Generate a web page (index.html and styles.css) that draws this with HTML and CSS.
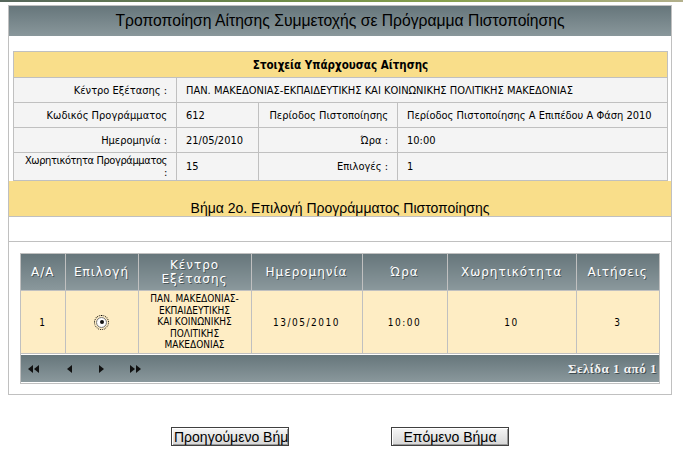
FILE: index.html
```html
<!DOCTYPE html>
<html lang="el">
<head>
    <meta charset="UTF-8">
    <title>Τροποποίηση Αίτησης Συμμετοχής</title>
    <link rel="stylesheet" href="styles.css">
</head>
<body>
    <div class="topline"></div>

    <div class="panel">
        <div class="panel-title">Τροποποίηση Αίτησης Συμμετοχής σε Πρόγραμμα Πιστοποίησης</div>

        <table class="info">
            <colgroup>
                <col class="c-lbl1">
                <col class="c-val1">
                <col class="c-lbl2">
                <col class="c-val2">
            </colgroup>
            <tr>
                <th colspan="4" class="info-head">Στοιχεία Υπάρχουσας Αίτησης</th>
            </tr>
            <tr>
                <td class="lbl">Κέντρο Εξέτασης :</td>
                <td colspan="3">ΠΑΝ. ΜΑΚΕΔΟΝΙΑΣ-ΕΚΠΑΙΔΕΥΤΙΚΗΣ ΚΑΙ ΚΟΙΝΩΝΙΚΗΣ ΠΟΛΙΤΙΚΗΣ ΜΑΚΕΔΟΝΙΑΣ</td>
            </tr>
            <tr>
                <td class="lbl">Κωδικός Προγράμματος</td>
                <td>612</td>
                <td class="lbl">Περίοδος Πιστοποίησης</td>
                <td>Περίοδος Πιστοποίησης Α Επιπέδου Α Φάση 2010</td>
            </tr>
            <tr>
                <td class="lbl">Ημερομηνία :</td>
                <td>21/05/2010</td>
                <td class="lbl">Ώρα :</td>
                <td>10:00</td>
            </tr>
            <tr class="tall">
                <td class="lbl nowrap">Χωρητικότητα Προγράμματος<br>:</td>
                <td>15</td>
                <td class="lbl">Επιλογές :</td>
                <td>1</td>
            </tr>
        </table>

        <div class="step-title">Βήμα 2ο. Επιλογή Προγράμματος Πιστοποίησης</div>
        <div class="step-gap"></div>

        <div class="grid-area">
            <div class="grid">
                <table class="grid-table">
                    <colgroup>
                        <col class="g-aa">
                        <col class="g-sel">
                        <col class="g-center">
                        <col class="g-date">
                        <col class="g-time">
                        <col class="g-cap">
                        <col class="g-req">
                    </colgroup>
                    <tr class="grid-head">
                        <th>Α/Α</th>
                        <th>Επιλογή</th>
                        <th>Κέντρο<br>Εξέτασης</th>
                        <th>Ημερομηνία</th>
                        <th>Ώρα</th>
                        <th>Χωρητικότητα</th>
                        <th>Αιτήσεις</th>
                    </tr>
                    <tr class="grid-row">
                        <td class="num">1</td>
                        <td><span class="radio"><span class="radio-dot"></span></span></td>
                        <td class="center-name">ΠΑΝ. ΜΑΚΕΔΟΝΙΑΣ-<br>ΕΚΠΑΙΔΕΥΤΙΚΗΣ<br>ΚΑΙ ΚΟΙΝΩΝΙΚΗΣ<br>ΠΟΛΙΤΙΚΗΣ<br>ΜΑΚΕΔΟΝΙΑΣ</td>
                        <td class="num">13/05/2010</td>
                        <td class="num">10:00</td>
                        <td class="num">10</td>
                        <td class="num">3</td>
                    </tr>
                </table>
                <div class="pager-wrap">
                    <div class="pager">
                        <div class="pager-nav">
                            <svg width="12" height="8" viewBox="0 0 12 8"><path d="M0 4L5 0V8Z M6 4L11 0V8Z" fill="#111"/></svg>
                            <svg width="6" height="8" viewBox="0 0 6 8"><path d="M0 4L5 0V8Z" fill="#111"/></svg>
                            <svg width="6" height="8" viewBox="0 0 6 8"><path d="M5 4L0 0V8Z" fill="#111"/></svg>
                            <svg width="12" height="8" viewBox="0 0 12 8"><path d="M5 4L0 0V8Z M11 4L6 0V8Z" fill="#111"/></svg>
                        </div>
                        <div class="pager-info">Σελίδα 1 από 1</div>
                    </div>
                </div>
            </div>
        </div>
    </div>

    <div class="actions">
        <button class="btn clip">Προηγούμενο Βήμα</button>
        <button class="btn">Επόμενο Βήμα</button>
    </div>
</body>
</html>
```

FILE: styles.css
```css
body {
    margin: 0;
    background-color: #fff;
    font-family: "DejaVu Sans Condensed", "DejaVu Sans", sans-serif;
    font-size: 11px;
    color: #000;
}

.topline {
    height: 2px;
    background: linear-gradient(to right, #56665c, #6d8a48 40%, #87a04e 65%, #b3b08c);
}

.panel {
    width: 664px;
    box-sizing: border-box;
    margin: 3px 0 0 8px;
    border: 1px solid #c0c0c0;
    padding-bottom: 10px;
}

.panel-title {
    height: 30px;
    line-height: 30px;
    text-align: center;
    background: linear-gradient(#66767b, #89979b);
    font-family: "Liberation Sans", Arial, sans-serif;
    font-size: 15.7px;
    color: #000;
}

/* existing application details */
.info {
    width: 654px;
    margin: 15px 4px 0 4px;
    border-collapse: collapse;
    table-layout: fixed;
}

.c-lbl1 { width: 163px; }
.c-val1 { width: 82px; }
.c-lbl2 { width: 139px; }
.c-val2 { width: 270px; }

.info th,
.info td {
    border: 1px solid #c0c0c0;
    height: 24px;
    padding: 0 9px;
    background-color: #f4f4f4;
    text-align: left;
}

.info .info-head {
    height: 25px;
    background-color: #f9de8a;
    text-align: center;
    font-weight: bold;
    font-size: 11.5px;
}

.info td.lbl {
    text-align: right;
}

.info td.nowrap {
    white-space: nowrap;
    padding-left: 0;
    letter-spacing: -0.4px;
}

.info .tall td {
    height: 27px;
    line-height: 12px;
}

.step-title {
    height: 36px;
    box-sizing: border-box;
    padding-top: 19px;
    background-color: #f9de8a;
    border-bottom: 1px solid #c0c0c0;
    text-align: center;
    font-family: "Liberation Sans", Arial, sans-serif;
    font-size: 14px;
}

.step-gap {
    height: 24px;
    border-bottom: 1px solid #c0c0c0;
}

.grid-area {
    padding: 11px 12px 0 11px;
}

.grid {
    width: 640px;
    box-sizing: border-box;
    border: 1px solid #c0c0c0;
}

.grid-table {
    width: 100%;
    border-collapse: collapse;
    border-style: hidden;
    table-layout: fixed;
}

.g-aa { width: 44px; }
.g-sel { width: 73px; }
.g-center { width: 113px; }
.g-date { width: 111px; }
.g-time { width: 85px; }
.g-cap { width: 129px; }
.g-req { width: 83px; }

.grid-table th,
.grid-table td {
    border: 1px solid #c0c0c0;
    padding: 0;
    text-align: center;
    font-family: "DejaVu Sans", Verdana, sans-serif;
}

.grid-head th {
    height: 36px;
    background: linear-gradient(#66767b, #8a989c);
    color: #fff;
    font-weight: normal;
    font-size: 12px;
    letter-spacing: 1px;
    line-height: 14px;
    text-shadow: 1px 1px 0 #4b575b;
}

.grid-row td {
    height: 62px;
    background-color: #feedc4;
    font-family: "DejaVu Sans Condensed", "DejaVu Sans", sans-serif;
    font-size: 10px;
}

.grid-row td.num {
    letter-spacing: 1.5px;
}

.grid-row .center-name {
    line-height: 11.6px;
}

.radio {
    display: inline-block;
    width: 9px;
    height: 9px;
    border: 1px solid #7a7a7a;
    border-radius: 50%;
    background: radial-gradient(#fff 55%, #d8d8d8);
    outline: 1px dotted #000;
    outline-offset: 1px;
    position: relative;
    vertical-align: middle;
}

.radio-dot {
    position: absolute;
    left: 2.5px;
    top: 2.5px;
    width: 4px;
    height: 4px;
    border-radius: 50%;
    background-color: #111;
}

.pager-wrap {
    border-top: 1px solid #c0c0c0;
    padding: 1px 0;
}

.pager {
    height: 27px;
    display: flex;
    align-items: center;
    justify-content: space-between;
    background: linear-gradient(#66767b, #8a989c);
}

.pager-nav {
    display: flex;
    align-items: center;
    padding-left: 7px;
}

.pager-nav svg:nth-child(1) { margin-right: 27px; }
.pager-nav svg:nth-child(2) { margin-right: 26px; }
.pager-nav svg:nth-child(3) { margin-right: 25px; }

.pager-info {
    padding-right: 2px;
    font-family: "Liberation Serif", "Times New Roman", serif;
    font-weight: bold;
    font-size: 13px;
    letter-spacing: 0.5px;
    color: #f4f4f4;
    text-shadow: 1px 1px 0 #3e4a4e;
}

.actions {
    width: 664px;
    margin: 32px 0 0 8px;
    display: flex;
    justify-content: center;
    gap: 102px;
}

.btn {
    width: 118px;
    height: 19px;
    padding: 0 2px;
    border: 1px solid #404040;
    background: linear-gradient(#f6f6f6, #d6d6d6);
    box-shadow: inset 1px 1px 0 #fff, inset -1px -1px 0 #9a9a9a;
    font-family: "Liberation Sans", Arial, sans-serif;
    font-size: 14px;
    color: #000;
    white-space: nowrap;
    overflow: hidden;
}

.btn.clip {
    text-align: left;
}
```
